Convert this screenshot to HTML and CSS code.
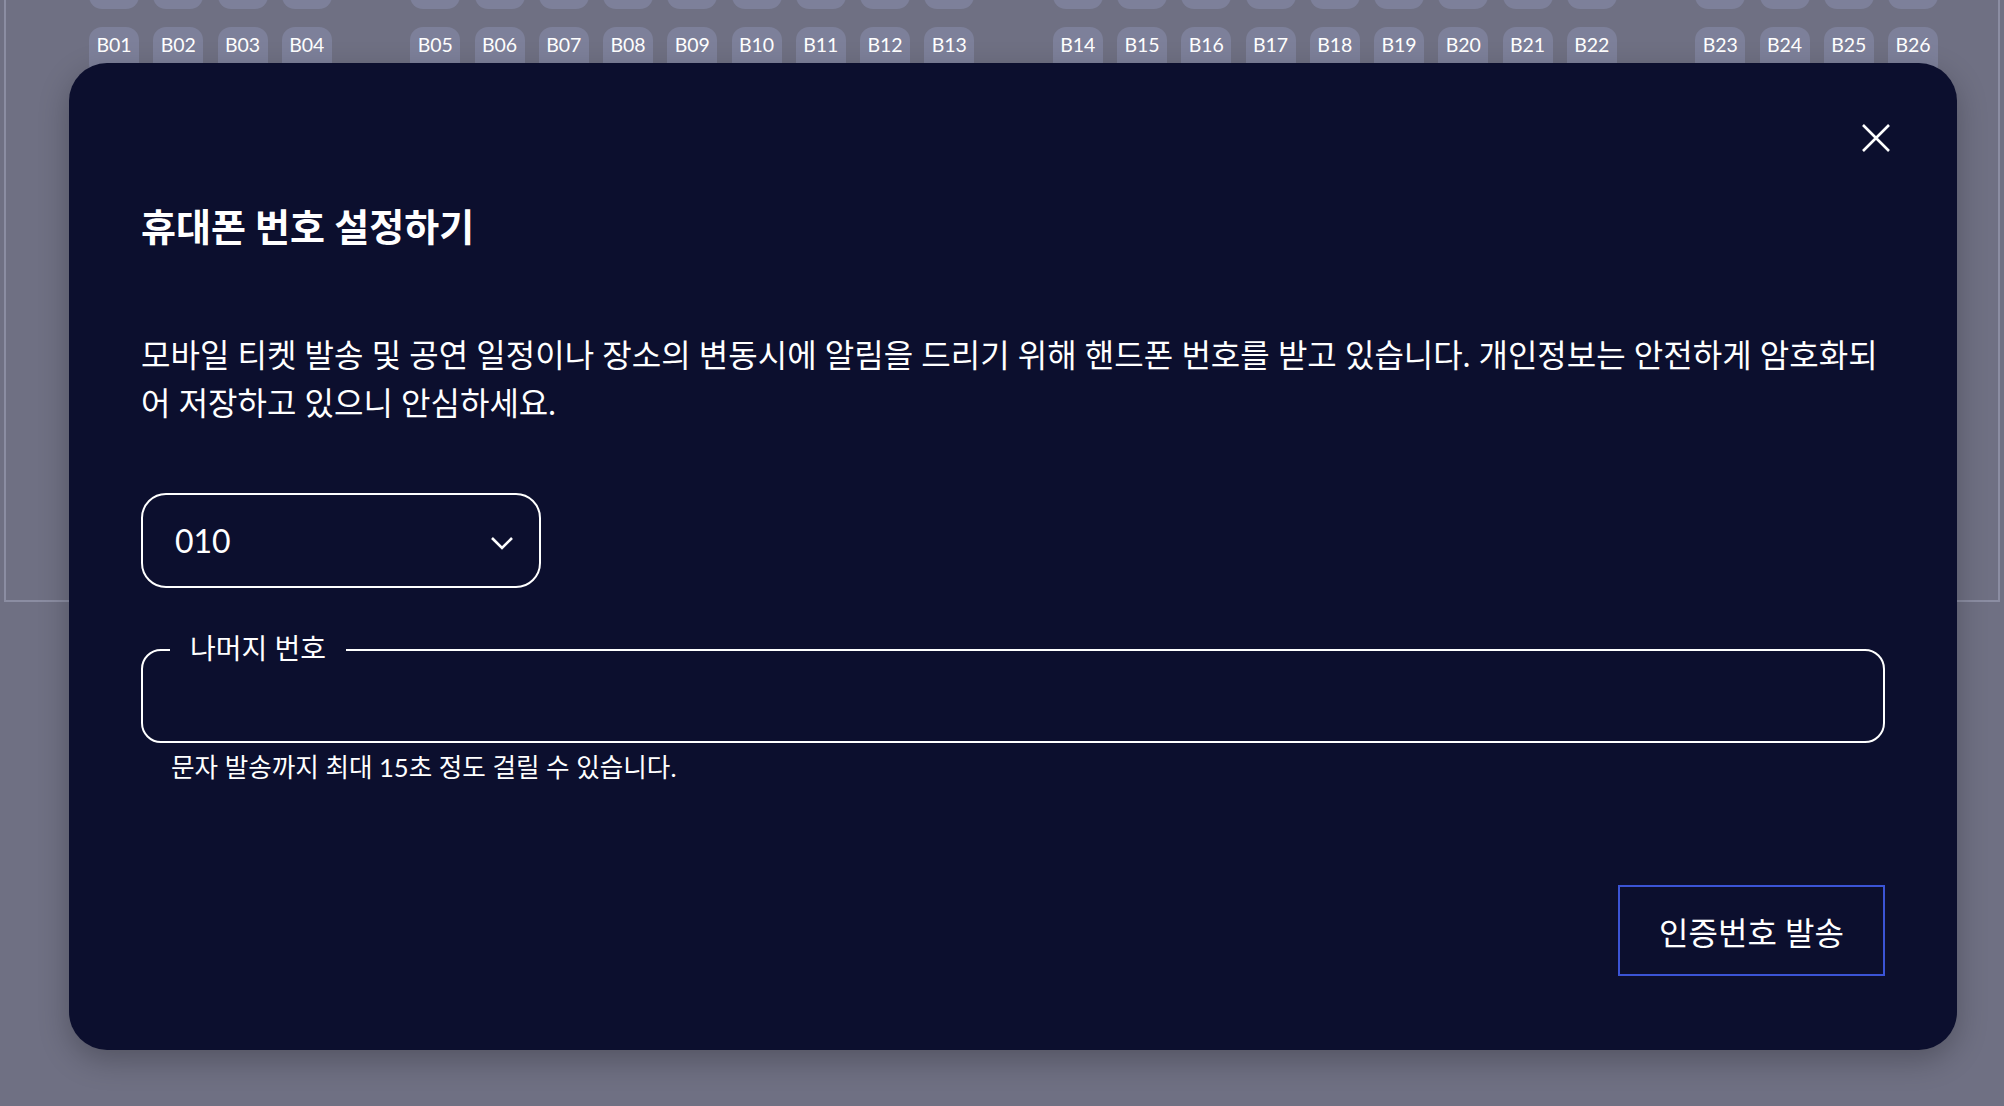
FILE: index.html
```html
<!DOCTYPE html>
<html lang="ko">
<head>
  <meta charset="UTF-8">
  <meta name="viewport" content="width=device-width, initial-scale=1.0">
  <title>휴대폰 번호 설정하기</title>
  <link rel="stylesheet" href="styles.css">
</head>
<body>
  <div class="seatmap">
    <div class="seat-rows">
      <div class="seat-row">
        <div class="seat"></div><div class="seat"></div><div class="seat"></div><div class="seat"></div>
        <div class="aisle"></div>
        <div class="seat"></div><div class="seat"></div><div class="seat"></div><div class="seat"></div><div class="seat"></div><div class="seat"></div><div class="seat"></div><div class="seat"></div><div class="seat"></div>
        <div class="aisle"></div>
        <div class="seat"></div><div class="seat"></div><div class="seat"></div><div class="seat"></div><div class="seat"></div><div class="seat"></div><div class="seat"></div><div class="seat"></div><div class="seat"></div>
        <div class="aisle"></div>
        <div class="seat"></div><div class="seat"></div><div class="seat"></div><div class="seat"></div>
      </div>
      <div class="seat-row">
        <div class="seat">B01</div><div class="seat">B02</div><div class="seat">B03</div><div class="seat">B04</div>
        <div class="aisle"></div>
        <div class="seat">B05</div><div class="seat">B06</div><div class="seat">B07</div><div class="seat">B08</div><div class="seat">B09</div><div class="seat">B10</div><div class="seat">B11</div><div class="seat">B12</div><div class="seat">B13</div>
        <div class="aisle"></div>
        <div class="seat">B14</div><div class="seat">B15</div><div class="seat">B16</div><div class="seat">B17</div><div class="seat">B18</div><div class="seat">B19</div><div class="seat">B20</div><div class="seat">B21</div><div class="seat">B22</div>
        <div class="aisle"></div>
        <div class="seat">B23</div><div class="seat">B24</div><div class="seat">B25</div><div class="seat">B26</div>
      </div>
    </div>
  </div>

  <div class="modal">
    <div class="modal-head">
      <button class="close-btn" aria-label="닫기">
        <svg width="30" height="30" viewBox="0 0 30 30">
          <path d="M2 2 L28 28 M28 2 L2 28" stroke="#fff" stroke-width="2.6" fill="none"/>
        </svg>
      </button>
    </div>
    <h2 class="modal-title">휴대폰 번호 설정하기</h2>
    <p class="modal-desc">모바일 티켓 발송 및 공연 일정이나 장소의 변동시에 알림을 드리기 위해 핸드폰 번호를 받고 있습니다. 개인정보는 안전하게 암호화되어 저장하고 있으니 안심하세요.</p>

    <div class="select-box">
      <span class="select-value">010</span>
      <svg class="chevron" width="24" height="14" viewBox="0 0 24 14">
        <path d="M2 2 L12 12 L22 2" stroke="#fff" stroke-width="2.6" fill="none"/>
      </svg>
    </div>

    <div class="field">
      <span class="field-label">나머지 번호</span>
    </div>
    <p class="field-help">문자 발송까지 최대 15초 정도 걸릴 수 있습니다.</p>

    <div class="modal-actions">
      <button class="send-btn">인증번호 발송</button>
    </div>
  </div>
</body>
</html>
```

FILE: styles.css
```css
body {
  margin: 0;
  height: 1106px;
  overflow: hidden;
  position: relative;
  background: #6f7083;
  font-family: Lato, "Noto Sans CJK KR", sans-serif;
  color: #fff;
}

.seatmap {
  display: flow-root;
  margin: 0 4px;
  height: 602px;
  box-sizing: border-box;
  border: 2px solid #8b8da2;
  border-top: none;
}

.seat-rows {
  display: flex;
  flex-direction: column;
  gap: 18px;
  margin-top: -41px;
  padding-left: 83px;
}

.seat-row {
  display: flex;
  gap: 14.25px;
}

.seat {
  width: 50px;
  height: 50px;
  box-sizing: border-box;
  padding-top: 7px;
  border-radius: 13px;
  background: #7d809a;
  color: #fff;
  font-size: 19.5px;
  line-height: 22px;
  text-align: center;
}

.aisle {
  width: 50px;
}

.modal {
  position: absolute;
  top: 63px;
  left: 69px;
  width: 1888px;
  box-sizing: border-box;
  padding: 58px 72px 74px;
  background: #0c0f2e;
  border-radius: 38px;
  box-shadow: 0 10px 30px rgba(0, 0, 0, 0.25);
}

.modal-head {
  display: flex;
  justify-content: flex-end;
  height: 34px;
  margin-right: -8px;
}

.close-btn {
  width: 34px;
  height: 34px;
  padding: 2px;
  border: none;
  background: none;
  cursor: pointer;
}

.modal-title {
  margin: 46px 0 0;
  font-size: 38px;
  line-height: 50px;
  font-weight: 700;
}

.modal-desc {
  margin: 80px 0 0;
  font-size: 32px;
  line-height: 48px;
}

.select-box {
  margin-top: 66px;
  width: 400px;
  height: 95px;
  box-sizing: border-box;
  border: 2px solid #fff;
  border-radius: 25px;
  padding: 0 25px 0 32px;
  display: flex;
  align-items: center;
  justify-content: space-between;
}

.select-value {
  font-size: 32px;
}

.chevron {
  margin-top: 4px;
}

.field {
  position: relative;
  margin-top: 61px;
  height: 94px;
  box-sizing: border-box;
  border: 2px solid #fff;
  border-radius: 20px;
}

.field-label {
  position: absolute;
  left: 27px;
  top: -21px;
  padding: 0 20px;
  background: #0c0f2e;
  font-size: 28px;
  line-height: 36px;
}

.field-help {
  margin: 5px 0 0;
  padding-left: 30px;
  font-size: 25.6px;
  line-height: 38px;
}

.modal-actions {
  display: flex;
  justify-content: flex-end;
  margin-top: 99px;
}

.send-btn {
  width: 267px;
  height: 91px;
  border: 2px solid #3b54d6;
  background: transparent;
  color: #fff;
  font-family: inherit;
  font-size: 32px;
  cursor: pointer;
}
```
